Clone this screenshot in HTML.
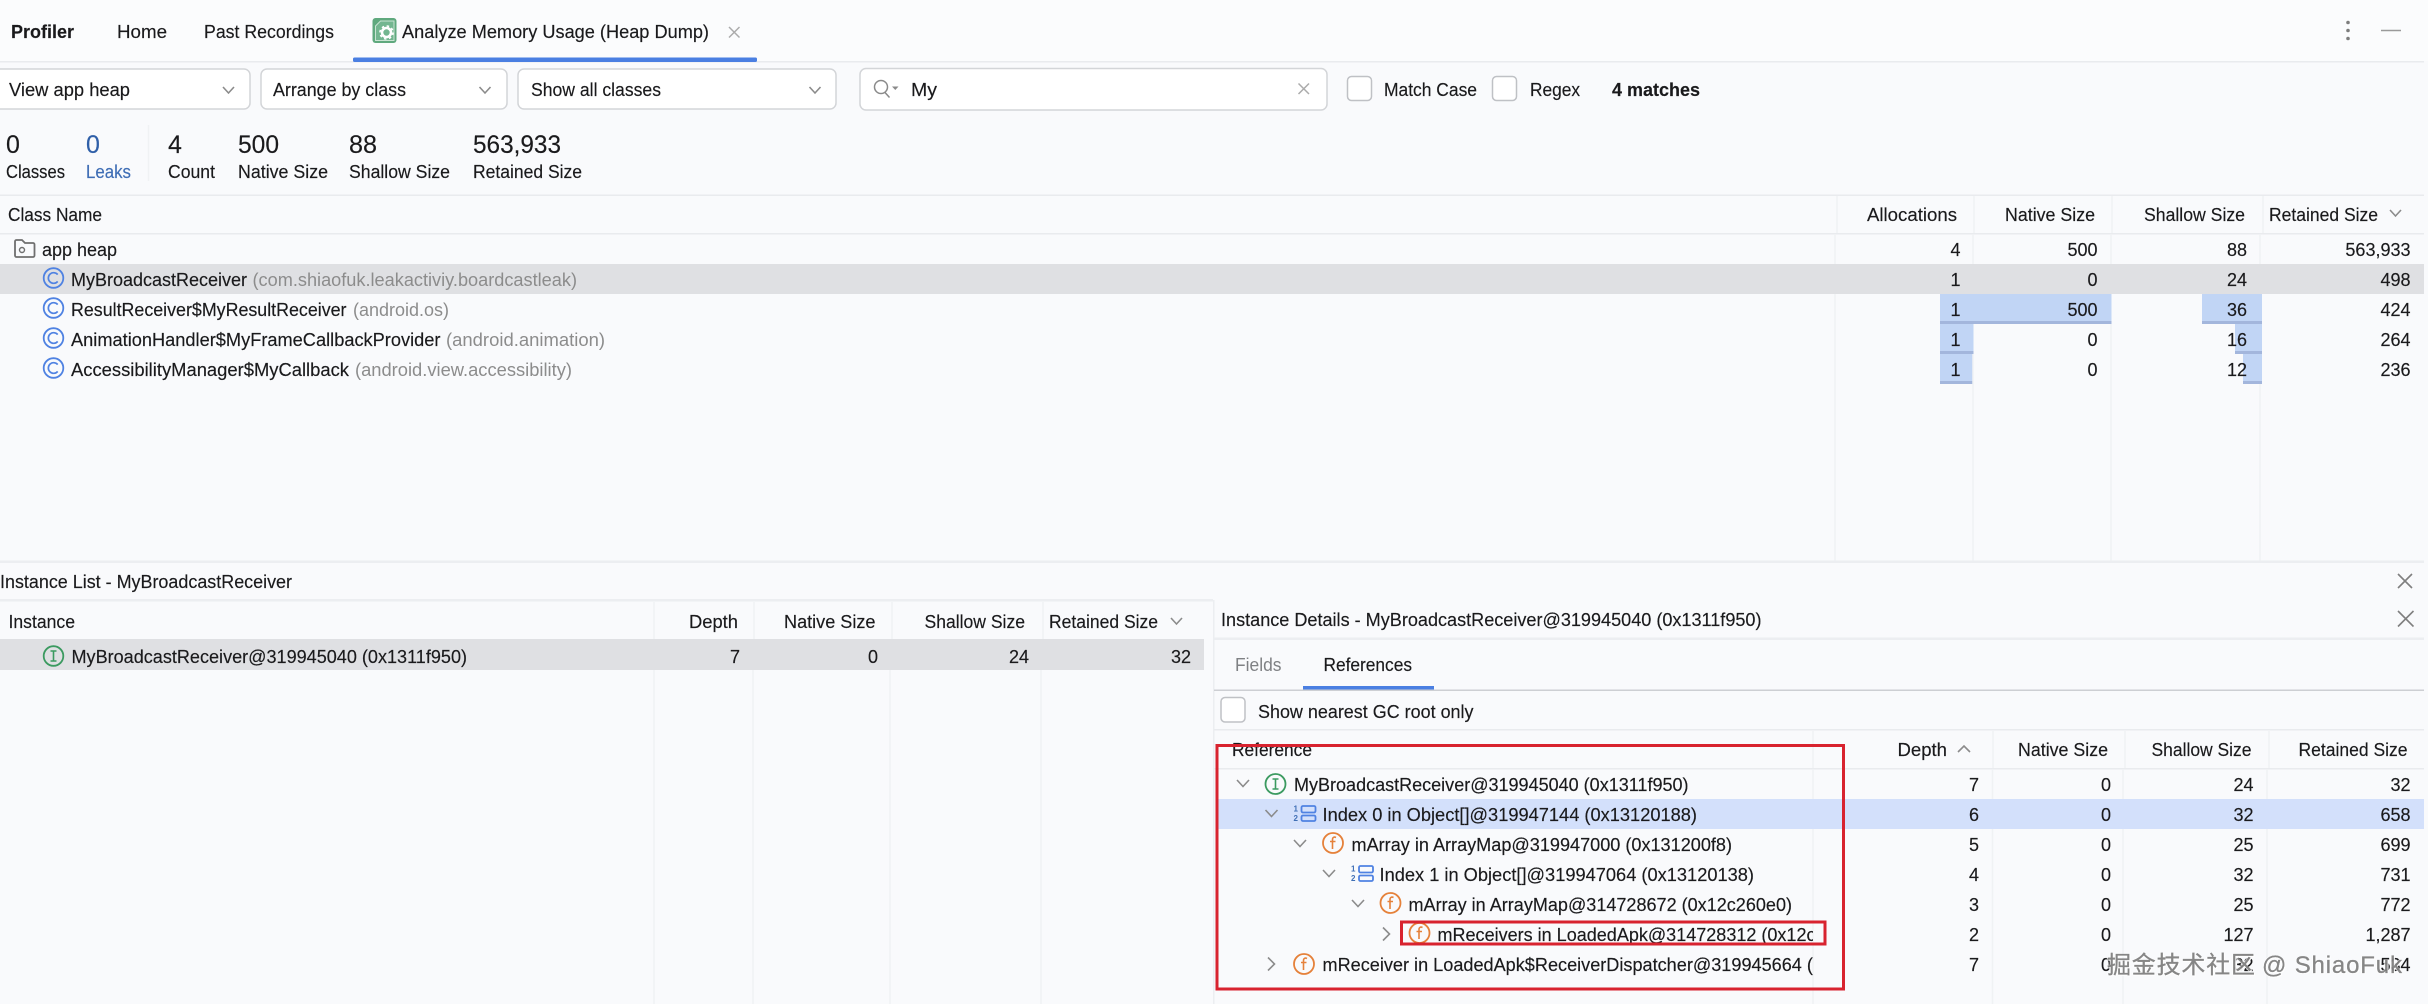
<!DOCTYPE html>
<html>
<head>
<meta charset="utf-8">
<style>
html,body{margin:0;padding:0;background:#f9fafc;overflow:hidden}
svg{display:block;position:absolute;left:0;top:0}
text{font-family:"Liberation Sans","Noto Sans CJK SC",sans-serif;font-size:18px;fill:#1a1a1c;stroke:#1a1a1c;stroke-width:.15px}
.n{text-anchor:end}
text.g{fill:#8c8c8c;stroke:none}
.sep{stroke:#f0f2f4;stroke-width:1.5}
.chev{fill:none;stroke:#8b8b8b;stroke-width:1.6}
.cb{fill:#fff;stroke:#bfc1c5;stroke-width:1.5}
.dd{fill:#fff;stroke:#d3d5d8;stroke-width:1.5}
text.wm{font-size:24px;fill:#808080;stroke:#808080;stroke-width:.3px;filter:drop-shadow(1px 1px 0 #fff) drop-shadow(-1px 0 0 rgba(255,255,255,.8));opacity:.95}
text.dg{font-size:8px;font-weight:700;fill:#3f6fb5;stroke:none}
</style>
</head>
<body>
<svg width="2428" height="1004" viewBox="0 0 2428 1004" xmlns="http://www.w3.org/2000/svg">
<defs>
<clipPath id="cl"><rect x="1200" y="760" width="613" height="230"/></clipPath>
</defs>
<rect width="2428" height="1004" fill="#f9fafc"/>
<rect width="2428" height="61" fill="#fbfcfd"/>
<rect x="0" y="61" width="2424" height="1.5" fill="#e9ebee"/>

<!-- tab bar -->
<text x="11" y="38" textLength="63" lengthAdjust="spacingAndGlyphs" style="font-weight:700">Profiler</text>
<text x="117" y="38" textLength="50" lengthAdjust="spacingAndGlyphs">Home</text>
<text x="204" y="38" textLength="130" lengthAdjust="spacingAndGlyphs">Past Recordings</text>
<rect x="372.500" y="18" width="24" height="25" rx="3" fill="#5fa97e"/>
<path d="M375.500 26l5-5h13.500v19.500h-18.500z" fill="#73b690" stroke="#c9e4d3" stroke-width="1"/>
<circle cx="386.500" cy="32.500" r="4.500" fill="none" stroke="#fff" stroke-width="2.600"/>
<circle cx="386.500" cy="32.500" r="6.500" fill="none" stroke="#fff" stroke-width="1.600" stroke-dasharray="2.500 2.600"/>
<text x="402" y="38" textLength="307" lengthAdjust="spacingAndGlyphs">Analyze Memory Usage (Heap Dump)</text>
<path d="M729 27l10.500 10.500M739.500 27l-10.500 10.500" stroke="#ababab" stroke-width="1.500" fill="none"/>
<rect x="353" y="57.500" width="404" height="4.500" rx="1.500" fill="#4a7fe2"/>
<circle cx="2348" cy="22.500" r="1.800" fill="#7d7d7d"/>
<circle cx="2348" cy="30.500" r="1.800" fill="#7d7d7d"/>
<circle cx="2348" cy="38.500" r="1.800" fill="#7d7d7d"/>
<path d="M2381 30.500h20" stroke="#9a9a9a" stroke-width="1.600"/>

<!-- toolbar -->
<rect class="dd" x="-6" y="69" width="256" height="40" rx="6"/>
<rect class="dd" x="261" y="69" width="246" height="40" rx="6"/>
<rect class="dd" x="518" y="69" width="318" height="40" rx="6"/>
<text x="9" y="96" textLength="121" lengthAdjust="spacingAndGlyphs">View app heap</text>
<text x="273" y="96" textLength="133" lengthAdjust="spacingAndGlyphs">Arrange by class</text>
<text x="531" y="96" textLength="130" lengthAdjust="spacingAndGlyphs">Show all classes</text>
<path class="chev" d="M223 87l5.500 6 5.500-6"/>
<path class="chev" d="M479.500 87l5.500 6 5.500-6"/>
<path class="chev" d="M809.500 87l5.500 6 5.500-6"/>
<rect class="dd" x="860" y="68.500" width="467" height="41.500" rx="6"/>
<circle cx="881" cy="87" r="6.500" fill="none" stroke="#8a8a8a" stroke-width="1.500"/>
<path d="M885 92.500l4.500 5" stroke="#8a8a8a" stroke-width="1.500" fill="none"/>
<path d="M892 86.500h6.500l-3.200 3.500z" fill="#8a8a8a"/>
<text x="911" y="96" textLength="26" lengthAdjust="spacingAndGlyphs">My</text>
<path d="M1298.500 83.500l10.500 10.500M1309 83.500l-10.500 10.500" stroke="#ababab" stroke-width="1.500" fill="none"/>
<rect class="cb" x="1347.500" y="76.500" width="24" height="24" rx="4"/>
<text x="1384" y="96" textLength="93" lengthAdjust="spacingAndGlyphs">Match Case</text>
<rect class="cb" x="1492.500" y="76.500" width="24" height="24" rx="4"/>
<text x="1530" y="96" textLength="50" lengthAdjust="spacingAndGlyphs">Regex</text>
<text x="1612" y="96" textLength="88" lengthAdjust="spacingAndGlyphs" style="font-weight:700">4 matches</text>

<!-- stats -->
<text x="6" y="153" style="font-size:25px">0</text>
<text x="86" y="153" style="font-size:25px;fill:#2f5fa8;stroke:#2f5fa8">0</text>
<text x="168" y="153" style="font-size:25px">4</text>
<text x="238" y="153" textLength="41" lengthAdjust="spacingAndGlyphs" style="font-size:25px">500</text>
<text x="349" y="153" textLength="28" lengthAdjust="spacingAndGlyphs" style="font-size:25px">88</text>
<text x="473" y="153" textLength="88" lengthAdjust="spacingAndGlyphs" style="font-size:25px">563,933</text>
<path class="sep" d="M148.500 125v56"/>
<text x="6" y="178" textLength="59" lengthAdjust="spacingAndGlyphs">Classes</text>
<text x="86" y="178" textLength="45" lengthAdjust="spacingAndGlyphs" style="fill:#3e6db5;stroke:#3e6db5">Leaks</text>
<text x="168" y="178" textLength="47" lengthAdjust="spacingAndGlyphs">Count</text>
<text x="238" y="178" textLength="90" lengthAdjust="spacingAndGlyphs">Native Size</text>
<text x="349" y="178" textLength="101" lengthAdjust="spacingAndGlyphs">Shallow Size</text>
<text x="473" y="178" textLength="109" lengthAdjust="spacingAndGlyphs">Retained Size</text>

<!-- class table -->
<rect x="0" y="264" width="2424" height="30" fill="#dfe0e3"/>
<rect x="1940" y="294" width="171.500" height="30" fill="#c1d5f5"/>
<rect x="1940" y="321" width="171.500" height="3" fill="#a3b6dc"/>
<rect x="2202" y="294" width="60" height="30" fill="#c1d5f5"/>
<rect x="2202" y="321" width="60" height="3" fill="#a3b6dc"/>
<rect x="1940" y="324" width="33.500" height="30" fill="#c1d5f5"/>
<rect x="1940" y="351" width="33.500" height="3" fill="#a3b6dc"/>
<rect x="2235" y="324" width="27" height="30" fill="#c1d5f5"/>
<rect x="2235" y="351" width="27" height="3" fill="#a3b6dc"/>
<rect x="1940" y="354" width="33.500" height="30" fill="#c1d5f5"/>
<rect x="1940" y="381" width="33.500" height="3" fill="#a3b6dc"/>
<rect x="2243" y="354" width="19" height="30" fill="#c1d5f5"/>
<rect x="2243" y="381" width="19" height="3" fill="#a3b6dc"/>

<rect x="0" y="194.500" width="2424" height="1.500" fill="#e9ebee"/>
<rect x="0" y="233" width="2424" height="1.500" fill="#e9ebee"/>
<path class="sep" d="M1837 196v37M1974 196v37M2112 196v37M2263 196v37"/>
<path class="sep" d="M1835 234v30M1973 234v30M2111 234v30M2260 234v30M1835 294v267M1973 354v207M2111 324v237M2260 384v177"/>
<text x="8" y="221" textLength="94" lengthAdjust="spacingAndGlyphs">Class Name</text>
<text x="1867" y="221" textLength="90" lengthAdjust="spacingAndGlyphs">Allocations</text>
<text x="2005" y="221" textLength="90" lengthAdjust="spacingAndGlyphs">Native Size</text>
<text x="2144" y="221" textLength="101" lengthAdjust="spacingAndGlyphs">Shallow Size</text>
<text x="2269" y="221" textLength="109" lengthAdjust="spacingAndGlyphs">Retained Size</text>
<path class="chev" d="M2390 210l5.500 6 5.500-6"/>

<path d="M15 254.500v-13a1.500 1.500 0 0 1 1.500-1.500h5.500l3 3h8a1.500 1.500 0 0 1 1.500 1.500v11a1.500 1.500 0 0 1-1.500 1.500h-16.500a1.500 1.500 0 0 1-1.500-1.500z" fill="none" stroke="#6f6f6f" stroke-width="1.800"/>
<circle cx="22" cy="250" r="2.500" fill="none" stroke="#6f6f6f" stroke-width="1.400"/>
<text x="42" y="256" textLength="75" lengthAdjust="spacingAndGlyphs">app heap</text>

<g transform="translate(53.500 278)"><circle r="9.800" fill="none" stroke="#4f82e2" stroke-width="1.800"/><path d="M4.200-3.400A5.300 5.300 0 1 0 4.200 3.400" fill="none" stroke="#4f82e2" stroke-width="1.700"/></g>
<g transform="translate(53.500 308)"><circle r="9.800" fill="none" stroke="#4f82e2" stroke-width="1.800"/><path d="M4.200-3.400A5.300 5.300 0 1 0 4.200 3.400" fill="none" stroke="#4f82e2" stroke-width="1.700"/></g>
<g transform="translate(53.500 338)"><circle r="9.800" fill="none" stroke="#4f82e2" stroke-width="1.800"/><path d="M4.200-3.400A5.300 5.300 0 1 0 4.200 3.400" fill="none" stroke="#4f82e2" stroke-width="1.700"/></g>
<g transform="translate(53.500 368)"><circle r="9.800" fill="none" stroke="#4f82e2" stroke-width="1.800"/><path d="M4.200-3.400A5.300 5.300 0 1 0 4.200 3.400" fill="none" stroke="#4f82e2" stroke-width="1.700"/></g>

<text x="71" y="286" textLength="176" lengthAdjust="spacingAndGlyphs">MyBroadcastReceiver</text>
<text class="g" x="252.500" y="286" textLength="324.500" lengthAdjust="spacingAndGlyphs">(com.shiaofuk.leakactiviy.boardcastleak)</text>
<text x="71" y="316" textLength="275.500" lengthAdjust="spacingAndGlyphs">ResultReceiver$MyResultReceiver</text>
<text class="g" x="353" y="316" textLength="96" lengthAdjust="spacingAndGlyphs">(android.os)</text>
<text x="71" y="346" textLength="369.500" lengthAdjust="spacingAndGlyphs">AnimationHandler$MyFrameCallbackProvider</text>
<text class="g" x="446" y="346" textLength="159" lengthAdjust="spacingAndGlyphs">(android.animation)</text>
<text x="71" y="376" textLength="278" lengthAdjust="spacingAndGlyphs">AccessibilityManager$MyCallback</text>
<text class="g" x="355" y="376" textLength="217" lengthAdjust="spacingAndGlyphs">(android.view.accessibility)</text>

<text class="n" x="1960.500" y="256">4</text><text class="n" x="2097.500" y="256">500</text><text class="n" x="2247" y="256">88</text><text class="n" x="2410.500" y="256">563,933</text>
<text class="n" x="1960.500" y="286">1</text><text class="n" x="2097.500" y="286">0</text><text class="n" x="2247" y="286">24</text><text class="n" x="2410.500" y="286">498</text>
<text class="n" x="1960.500" y="316">1</text><text class="n" x="2097.500" y="316">500</text><text class="n" x="2247" y="316">36</text><text class="n" x="2410.500" y="316">424</text>
<text class="n" x="1960.500" y="346">1</text><text class="n" x="2097.500" y="346">0</text><text class="n" x="2247" y="346">16</text><text class="n" x="2410.500" y="346">264</text>
<text class="n" x="1960.500" y="376">1</text><text class="n" x="2097.500" y="376">0</text><text class="n" x="2247" y="376">12</text><text class="n" x="2410.500" y="376">236</text>

<!-- lower split -->
<rect x="0" y="560.500" width="2424" height="2.500" fill="#eceef1"/>
<rect x="0" y="599" width="1213" height="2.500" fill="#eceef1"/>
<rect x="1213" y="600" width="1.500" height="404" fill="#eceef1"/>

<!-- instance list -->
<text x="0" y="588" textLength="292" lengthAdjust="spacingAndGlyphs">Instance List - MyBroadcastReceiver</text>
<path d="M2398 574l14 14M2412 574l-14 14" stroke="#7f7f7f" stroke-width="1.600" fill="none"/>
<path class="sep" d="M654 602v37M754 602v37M892 602v37M1043 602v37M654 670v334M753 670v334M890 670v334M1041 670v334"/>
<text x="8.500" y="628" textLength="66.500" lengthAdjust="spacingAndGlyphs">Instance</text>
<text x="689" y="628" textLength="49" lengthAdjust="spacingAndGlyphs">Depth</text>
<text x="784" y="628" textLength="91.500" lengthAdjust="spacingAndGlyphs">Native Size</text>
<text x="924.500" y="628" textLength="100.500" lengthAdjust="spacingAndGlyphs">Shallow Size</text>
<text x="1049" y="628" textLength="109" lengthAdjust="spacingAndGlyphs">Retained Size</text>
<path class="chev" d="M1171 618l5.500 6 5.500-6"/>
<rect x="0" y="639" width="1204" height="31" fill="#dfe0e3"/>
<g transform="translate(53.500 656)"><circle r="9.800" fill="none" stroke="#3b9a60" stroke-width="1.800"/><path d="M-3-5h6M-3 5h6M0-5v10" fill="none" stroke="#3b9a60" stroke-width="1.600"/></g>
<text x="71.500" y="663" textLength="395.500" lengthAdjust="spacingAndGlyphs">MyBroadcastReceiver@319945040 (0x1311f950)</text>
<text class="n" x="740" y="663">7</text><text class="n" x="878" y="663">0</text><text class="n" x="1029" y="663">24</text><text class="n" x="1191" y="663">32</text>

<!-- instance details -->
<rect x="1214" y="637.500" width="1210" height="2.500" fill="#eceef1"/>
<text x="1221" y="626" textLength="540.500" lengthAdjust="spacingAndGlyphs">Instance Details - MyBroadcastReceiver@319945040 (0x1311f950)</text>
<path d="M2398 611l15.500 15.500M2413.500 611l-15.500 15.500" stroke="#7f7f7f" stroke-width="1.600" fill="none"/>
<text class="g" x="1235" y="671" textLength="46.500" lengthAdjust="spacingAndGlyphs" style="fill:#7f8184">Fields</text>
<text x="1323.500" y="671" textLength="88.500" lengthAdjust="spacingAndGlyphs">References</text>
<rect x="1214" y="689.500" width="1210" height="1.500" fill="#cdcfd3"/>
<rect x="1303" y="686" width="131" height="3.500" fill="#4a7fe2"/>
<rect class="cb" x="1221" y="697.500" width="24" height="24.500" rx="4"/>
<text x="1258" y="718" textLength="215.500" lengthAdjust="spacingAndGlyphs">Show nearest GC root only</text>
<rect x="1214" y="729" width="1210" height="1.500" fill="#e9ebee"/>
<rect x="1214" y="768" width="1210" height="1.500" fill="#e9ebee"/>
<rect x="1218" y="799" width="1206" height="30" fill="#d3e0fb"/>
<path class="sep" d="M1813 731v37M1993 731v37M2125 731v37M2269 731v37M1813 769v30M1992.500 769v30M2123 769v30M2267 769v30M1813 829v175M1992.500 829v175M2123 829v175M2267 829v175"/>
<text x="1232" y="756" textLength="80" lengthAdjust="spacingAndGlyphs">Reference</text>
<text x="1897.500" y="756" textLength="49.500" lengthAdjust="spacingAndGlyphs">Depth</text>
<path class="chev" d="M1958 752l6-6 6 6"/>
<text x="2018" y="756" textLength="90" lengthAdjust="spacingAndGlyphs">Native Size</text>
<text x="2151.500" y="756" textLength="100" lengthAdjust="spacingAndGlyphs">Shallow Size</text>
<text x="2298.500" y="756" textLength="109" lengthAdjust="spacingAndGlyphs">Retained Size</text>

<!-- tree -->
<path class="chev" d="M1237 780l6 6.500 6-6.500"/>
<path class="chev" d="M1265.500 810l6 6.500 6-6.500"/>
<path class="chev" d="M1294 840l6 6.500 6-6.500"/>
<path class="chev" d="M1323 870l6 6.500 6-6.500"/>
<path class="chev" d="M1352 900l6 6.500 6-6.500"/>
<path class="chev" d="M1383 927.500l6.500 6.500-6.500 6.500"/>
<path class="chev" d="M1268 957.500l6.500 6.500-6.500 6.500"/>

<g transform="translate(1275.500 784)"><circle r="10" fill="none" stroke="#3b9a60" stroke-width="1.800"/><path d="M-3-5h6M-3 5h6M0-5v10" fill="none" stroke="#3b9a60" stroke-width="1.600"/></g>
<g transform="translate(1293 813)">
<text class="dg" x="0.500" y="-1.500">1</text>
<text class="dg" x="0.500" y="8">2</text>
<rect x="8.500" y="-7" width="14" height="6.500" rx="1.500" fill="none" stroke="#4f82e2" stroke-width="1.800"/>
<rect x="8.500" y="2.500" width="14" height="5.500" rx="1.500" fill="none" stroke="#4f82e2" stroke-width="1.800"/>
</g>
<g transform="translate(1350.500 873)">
<text class="dg" x="0.500" y="-1.500">1</text>
<text class="dg" x="0.500" y="8">2</text>
<rect x="8.500" y="-7" width="14" height="6.500" rx="1.500" fill="none" stroke="#4f82e2" stroke-width="1.800"/>
<rect x="8.500" y="2.500" width="14" height="5.500" rx="1.500" fill="none" stroke="#4f82e2" stroke-width="1.800"/>
</g>
<g transform="translate(1333 843)"><circle r="10" fill="none" stroke="#e5813a" stroke-width="1.800"/><path d="M3-5.500c-2-1-3.500 0-3.500 2v9.500M-3-1.500h5.500" fill="none" stroke="#e5813a" stroke-width="1.600"/></g>
<g transform="translate(1390.500 903)"><circle r="10" fill="none" stroke="#e5813a" stroke-width="1.800"/><path d="M3-5.500c-2-1-3.500 0-3.500 2v9.500M-3-1.500h5.500" fill="none" stroke="#e5813a" stroke-width="1.600"/></g>
<g transform="translate(1419.500 933)"><circle r="10" fill="none" stroke="#e5813a" stroke-width="1.800"/><path d="M3-5.500c-2-1-3.500 0-3.500 2v9.500M-3-1.500h5.500" fill="none" stroke="#e5813a" stroke-width="1.600"/></g>
<g transform="translate(1304 964)"><circle r="10" fill="none" stroke="#e5813a" stroke-width="1.800"/><path d="M3-5.500c-2-1-3.500 0-3.500 2v9.500M-3-1.500h5.500" fill="none" stroke="#e5813a" stroke-width="1.600"/></g>

<text x="1294" y="791" textLength="394.500" lengthAdjust="spacingAndGlyphs">MyBroadcastReceiver@319945040 (0x1311f950)</text>
<text x="1322.500" y="821" textLength="374.500" lengthAdjust="spacingAndGlyphs">Index 0 in Object[]@319947144 (0x13120188)</text>
<text x="1351.500" y="851" textLength="380.500" lengthAdjust="spacingAndGlyphs">mArray in ArrayMap@319947000 (0x131200f8)</text>
<text x="1379.500" y="881" textLength="374.500" lengthAdjust="spacingAndGlyphs">Index 1 in Object[]@319947064 (0x13120138)</text>
<text x="1408.500" y="911" textLength="383.500" lengthAdjust="spacingAndGlyphs">mArray in ArrayMap@314728672 (0x12c260e0)</text>
<g clip-path="url(#cl)">
<text x="1437.500" y="941" textLength="378" lengthAdjust="spacingAndGlyphs">mReceivers in LoadedApk@314728312 (0x12c</text>
<text x="1322.500" y="971" textLength="500.500" lengthAdjust="spacingAndGlyphs">mReceiver in LoadedApk$ReceiverDispatcher@319945664 (0</text>
</g>

<text class="n" x="1979" y="791">7</text><text class="n" x="2111" y="791">0</text><text class="n" x="2253.500" y="791">24</text><text class="n" x="2410.500" y="791">32</text>
<text class="n" x="1979" y="821">6</text><text class="n" x="2111" y="821">0</text><text class="n" x="2253.500" y="821">32</text><text class="n" x="2410.500" y="821">658</text>
<text class="n" x="1979" y="851">5</text><text class="n" x="2111" y="851">0</text><text class="n" x="2253.500" y="851">25</text><text class="n" x="2410.500" y="851">699</text>
<text class="n" x="1979" y="881">4</text><text class="n" x="2111" y="881">0</text><text class="n" x="2253.500" y="881">32</text><text class="n" x="2410.500" y="881">731</text>
<text class="n" x="1979" y="911">3</text><text class="n" x="2111" y="911">0</text><text class="n" x="2253.500" y="911">25</text><text class="n" x="2410.500" y="911">772</text>
<text class="n" x="1979" y="941">2</text><text class="n" x="2111" y="941">0</text><text class="n" x="2253.500" y="941">127</text><text class="n" x="2410.500" y="941">1,287</text>
<text class="n" x="1979" y="971">7</text><text class="n" x="2111" y="971">0</text><text class="n" x="2253.500" y="971">32</text><text class="n" x="2410.500" y="971">534</text>

<!-- red annotation boxes -->
<rect x="1217" y="745.500" width="626.500" height="243.500" fill="none" stroke="#d8232f" stroke-width="3"/>
<rect x="1401.500" y="922" width="423.500" height="22" fill="none" stroke="#d8232f" stroke-width="3"/>

<!-- watermark -->
<text class="wm" x="2107" y="973" textLength="148" lengthAdjust="spacing">掘金技术社区</text>
<text class="wm" x="2262" y="973" textLength="140" lengthAdjust="spacing">@ ShiaoFuk</text>
</svg>
</body>
</html>
